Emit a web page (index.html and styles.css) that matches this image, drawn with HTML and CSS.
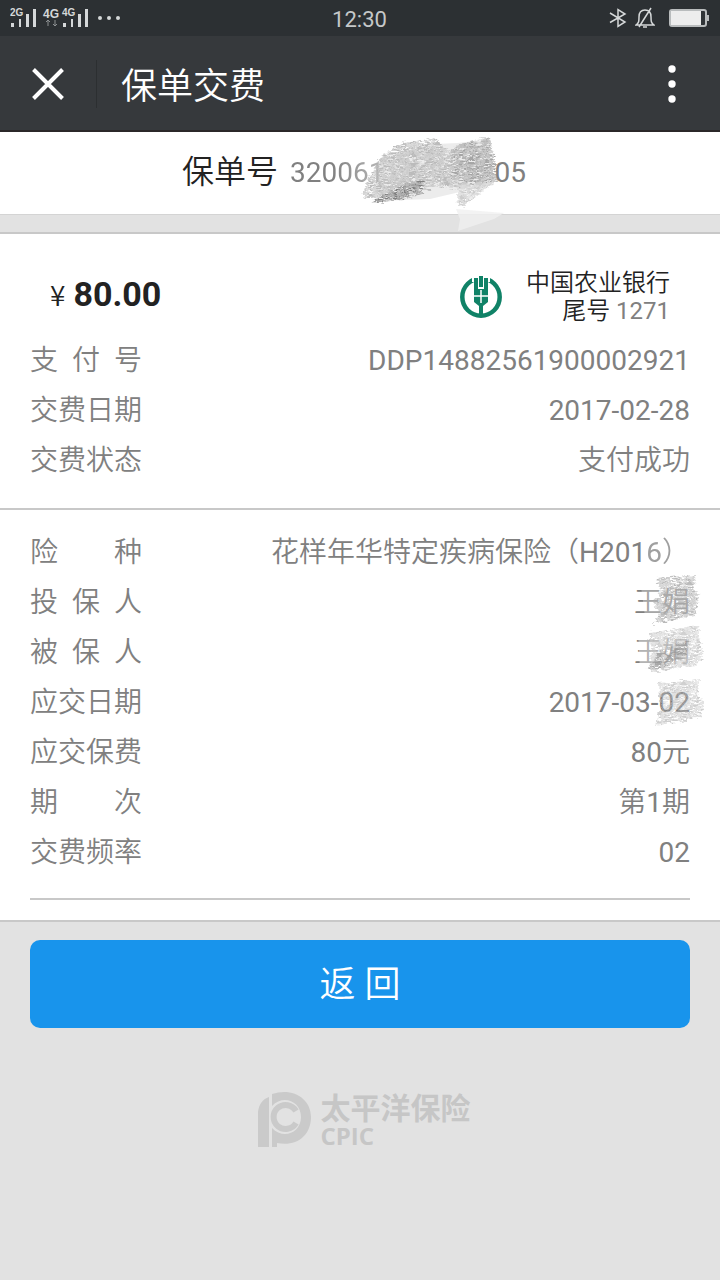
FILE: index.html
```
<!DOCTYPE html>
<html lang="zh-CN">
<head>
<meta charset="utf-8">
<meta name="viewport" content="width=device-width, initial-scale=1">
<title>保单交费</title>
<link rel="stylesheet" href="styles.css">
</head>
<body>
<svg class="defs" width="0" height="0" aria-hidden="true">
  <filter id="grain" x="-5%" y="-5%" width="110%" height="110%">
    <feTurbulence type="fractalNoise" baseFrequency="0.12 0.5" numOctaves="3" seed="4" result="noise"/>
    <feColorMatrix in="noise" type="matrix" values="0 0 0 0 0  0 0 0 0 0  0 0 0 0 0  0 3 0 0 -0.9" result="mask"/>
    <feComposite in="SourceGraphic" in2="mask" operator="in" result="strokes"/>
    <feDisplacementMap in="strokes" in2="noise" scale="8" xChannelSelector="R" yChannelSelector="G"/>
    <feGaussianBlur stdDeviation="0.5"/>
  </filter>
</svg>
<div class="statusbar">
  <div class="signals">
    <svg width="112" height="24" viewBox="0 0 112 24" role="img" aria-label="信号">
      <g fill="#d5d8d9">
        <path d="M1 17h3v4H1zM9 13h2v8H9zM16 8h3v13h-3zM23 3h3v18h-3zM53 17h3v4h-3zM61 13h2v8h-2zM68 8h3v13h-3zM75 3h3v18h-3z"/>
        <circle cx="90" cy="12" r="2"/><circle cx="99" cy="12" r="2"/><circle cx="108" cy="12" r="2"/>
        <text class="net" x="0" y="10">2G</text><text class="net net-main" x="33" y="12">4G</text><text class="net" x="52" y="10">4G</text>
      </g>
      <path d="M38 20v-6M36 16l2-2 2 2M45 14v6M43 18l2 2 2-2" stroke="#8c9092" fill="none"/>
    </svg>
  </div>
  <time class="clock">12:30</time>
  <div class="indicators">
    <svg width="18" height="20" viewBox="0 0 18 20" fill="none" stroke="#d5d8d9" stroke-width="1.500" role="img" aria-label="蓝牙"><path d="M1 5l15 9-7 4.500V1.500L16 6 1 14.500"/></svg>
    <svg width="20" height="22" viewBox="0 0 20 22" fill="none" stroke="#d5d8d9" stroke-width="1.500" role="img" aria-label="静音"><path d="M1 18c3-2 3-4 3-8 0-5 2-7 6-7s6 2 6 7c0 4 0 6 3 8zM8 20h4M16 1L4 20"/></svg>
    <svg width="40" height="20" viewBox="0 0 40 20" role="img" aria-label="电量"><rect x="1" y="2" width="36" height="16" rx="2" fill="#303437" stroke="#b9bcbd" stroke-width="2"/><rect x="2" y="3" width="30" height="14" fill="#ededed"/><path d="M38 7h2v6h-2z" fill="#b9bcbd"/></svg>
  </div>
</div>
<header class="navbar">
  <button class="close" aria-label="关闭"><svg width="32" height="32" viewBox="0 0 32 32"><path d="M1.500 1.500l29 29M30.500 1.500l-29 29" stroke="#fff" stroke-width="4"/></svg></button>
  <h1 class="title">保单交费</h1>
  <button class="more" aria-label="更多"><svg width="8" height="38" viewBox="0 0 8 38" fill="#fff"><circle cx="4" cy="4" r="3.700"/><circle cx="4" cy="19" r="3.700"/><circle cx="4" cy="34" r="3.700"/></svg></button>
</header>
<main>
  <section class="policy">
    <h2 class="policy-label">保单号</h2>
    <div class="policy-number"><span class="num fade-end">320061</span><svg class="smudge-gap" width="110" height="100" viewBox="0 0 110 100" aria-hidden="true">
      <path d="M-4 24L30 10l44-2 32-4 4 46-30 6-34 8-52 2z" fill="#e0e0e0" opacity=".6"/>
      <g filter="url(#grain)">
        <path d="M0 18L20 8 50 3l16 13 8-6 32-8 4 22 4 20-36 10-24-3-26 8-42 5-8-2 6-20z" fill="#bbb"/>
        <path d="M72 12l32-8 6 22 2 20-26 4-20-8z" fill="#a5a5a5"/>
        <path d="M8 54l32-9-2 14-20 6-32 3z" fill="#808080"/>
        <path d="M76 50l36-4-20 15-14 11-6-5z" fill="#ccc"/>
      </g>
      <path d="M72 74l48 4-10 6-36 12 2-12z" fill="#f0f0f0" opacity=".8"/>
    </svg><span class="num">05</span></div>
  </section>
  <section class="payment">
    <div class="summary">
      <p class="amount"><span class="currency">¥</span><strong>80.00</strong></p>
      <div class="bank">
        <svg width="44" height="44" viewBox="0 0 44 44" role="img" aria-label="中国农业银行">
          <circle cx="22" cy="22" r="18.700" fill="none" stroke="#108267" stroke-width="4.500"/>
          <path d="M13 0h18v7H13z" fill="#fff"/>
          <path d="M15 3h4v11h6V3h4v24l-5 4v11h-4V31l-5-4zM20 1h4v11h-4z" fill="#108267"/>
          <path d="M22 15v13M15 21h14" stroke="#fff" stroke-width="1.500"/>
        </svg>
        <p class="bank-name">中国农业银行<br>尾号 <span class="num">1271</span></p>
      </div>
    </div>
    <dl class="rows">
      <div class="row"><dt>支 付 号</dt><dd class="num">DDP14882561900002921</dd></div>
      <div class="row"><dt>交费日期</dt><dd class="num">2017-02-28</dd></div>
      <div class="row"><dt>交费状态</dt><dd>支付成功</dd></div>
    </dl>
  </section>
  <section class="details">
    <dl class="rows">
      <div class="row"><dt>险 种</dt><dd>花样年华特定疾病保险（<span class="num">H201</span><span class="faded"><span class="num">6</span>）</span></dd></div>
      <div class="row"><dt>投 保 人</dt><dd class="masked">王娟<svg class="smudge" width="68" height="54" viewBox="0 0 68 54" aria-hidden="true"><path d="M4 4l56-3 4 44-54 4z" fill="#fff" opacity=".3"/><path d="M20 3l40-3-3 14 7 5-3 9-2 13-42 8 6-11-6-10 8-11z" fill="#aaa" opacity=".8" filter="url(#grain)"/></svg></dd></div>
      <div class="row"><dt>被 保 人</dt><dd class="masked">王娟<svg class="smudge" width="74" height="54" viewBox="0 0 74 54" aria-hidden="true"><path d="M8 6l55-5 5 38-58 8z" fill="#fff" opacity=".4"/><g filter="url(#grain)" opacity=".85"><path d="M20 8l48-8 2 13 3 20-8 8-46 6 2-20z" fill="#c8c8c8"/><path d="M30 26l30-12-4 16-24 14-16 1z" fill="#999"/></g></svg></dd></div>
      <div class="row"><dt>应交日期</dt><dd class="masked num">2017-03-02<svg class="smudge" width="74" height="54" viewBox="0 0 74 54" aria-hidden="true"><path d="M28 8l41-3-1 18 7 5-4 14-46 9 7-18-3-10z" fill="#bbb" opacity=".7" filter="url(#grain)"/></svg></dd></div>
      <div class="row"><dt>应交保费</dt><dd><span class="num">80</span>元</dd></div>
      <div class="row"><dt>期 次</dt><dd>第<span class="num">1</span>期</dd></div>
      <div class="row"><dt>交费频率</dt><dd class="num">02</dd></div>
    </dl>
  </section>
  <div class="actions"><button class="back">返 回</button></div>
</main>
<footer class="brand">
  <svg width="54" height="57" viewBox="0 0 54 57" aria-hidden="true">
    <path d="M11 6v50H0V21C1 13 5 8 11 6zM14 3C34-4 53 7 53 26c0 19-15 30-34 26v4h-5V37c11 12 29 5 29-11S25 3 14 15z" fill="#cacaca"/>
    <path d="M38 20a12 12 0 1 0 0 12" fill="none" stroke="#cacaca" stroke-width="6"/>
  </svg>
  <div class="brand-text"><span class="brand-name">太平洋保险</span><span class="brand-en">CPIC</span></div>
</footer>
</body>
</html>
```
FILE: styles.css
```
* { box-sizing: border-box; }
body, h1, h2, p, dl, dd { margin: 0; }
body {
  background: #e2e2e2;
  color: #808080;
  font-family: Roboto, "Noto Sans CJK SC", sans-serif;
  font-size: 28px;
  font-weight: 350;
}
button { padding: 0; border: 0; background: none; font: inherit; color: inherit; }
svg { display: block; flex: none; }
.defs { position: absolute; }
.num { font-weight: 400; }

.statusbar {
  display: grid;
  grid-template-columns: 1fr auto 1fr;
  align-items: center;
  height: 36px;
  padding: 0 11px 0 10px;
  background: #2c3033;
  color: #c5c8c9;
}
.signals { padding-bottom: 2px; }
.net { font: bold 10px "Liberation Sans", sans-serif; }
.net-main { font-size: 12px; }
.clock { font-size: 22px; font-weight: 400; line-height: 36px; padding-top: 2px; }
.indicators { display: flex; align-items: center; justify-content: flex-end; gap: 8px; padding-bottom: 2px; }
.indicators svg:last-child { margin-left: 6px; }

.navbar {
  display: flex;
  align-items: center;
  height: 96px;
  padding-top: 2px;
  background: #36393c;
  border-bottom: 2px solid #2b2829;
  color: #fff;
}
.close { display: flex; align-items: center; height: 48px; padding: 0 32px; border-right: 1px solid #2c2f31; }
.title { flex: 1; padding: 6px 0 0 24px; font-size: 36px; font-weight: 350; line-height: 48px; }
.more { padding: 0 44px; }

.policy {
  display: flex;
  justify-content: center;
  align-items: center;
  gap: 12px;
  height: 83px;
  padding: 0 12px 2px 0;
  background: #fff;
  border-bottom: 1px solid #d4d4d4;
}
.policy-label { color: #222; font-size: 32px; font-weight: 350; line-height: 48px; }
.policy-number { display: flex; align-items: center; height: 48px; }
.fade-end { color: transparent; background: linear-gradient(90deg, #808080 45%, #b0b0b0 90%); background-clip: text; }
.smudge-gap { margin-top: 26px; overflow: visible; }

.payment { margin-top: 17px; padding: 26px 30px 22px; background: #fff; border-top: 2px solid #c8c8c8; }
.summary { display: flex; justify-content: space-between; align-items: center; padding: 8px 20px 10px; height: 76px; }
.amount { display: flex; align-items: center; gap: 8px; color: #222; line-height: 40px; padding-bottom: 6px; }
.amount strong { font-size: 34px; font-weight: 700; }
.currency { font-family: "Noto Sans CJK SC", sans-serif; font-size: 28px; }
.bank { display: flex; align-items: center; gap: 23px; }
.bank-name { color: #222; font-size: 24px; line-height: 28px; text-align: right; }
.bank-name .num { color: #808080; }

.rows { line-height: 50px; }
.row { display: flex; justify-content: space-between; }
.row dt { width: 112px; text-align-last: justify; }
.row dd { text-align: right; }
.faded { opacity: .75; }
.masked { position: relative; }
.smudge { position: absolute; top: -3px; right: -14px; }

.details { padding: 18px 30px 20px; background: #fff; border-top: 2px solid #c8c8c8; border-bottom: 2px solid #c8c8c8; }
.details .rows { padding-bottom: 20px; border-bottom: 2px solid #c8c8c8; }

.actions { padding: 18px 30px 0; }
.back { display: block; width: 100%; height: 88px; padding-bottom: 6px; border-radius: 10px; background: #1894ec; color: #fff; font-size: 36px; }

.brand { display: flex; justify-content: center; align-items: center; gap: 9px; padding: 62px 0 40px; margin-left: 8px; color: #c6c6c6; }
.brand-text { display: flex; flex-direction: column; padding-top: 4px; font-weight: 700; }
.brand-name { font-size: 30px; line-height: 30px; }
.brand-en { font-family: "Open Sans", sans-serif; font-size: 24px; line-height: 24px; }
```
